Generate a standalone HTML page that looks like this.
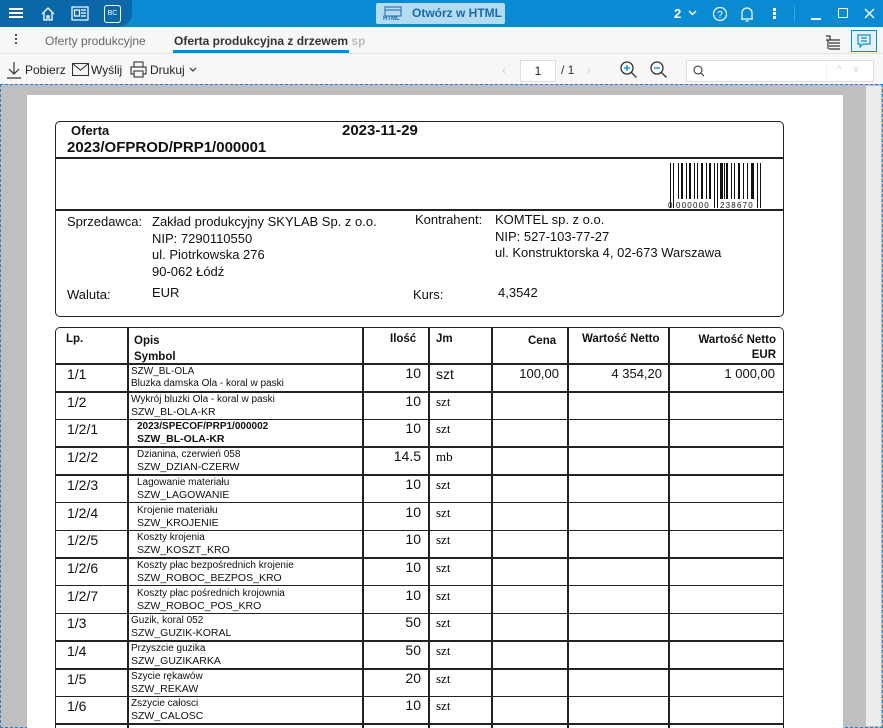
<!DOCTYPE html>
<html style="overflow:hidden"><head><meta charset="utf-8"><style>
*{margin:0;padding:0;box-sizing:border-box}
html,body{width:883px;height:728px;overflow:hidden}
body{font-family:"Liberation Sans",Arial,sans-serif;background:#fff;position:relative}
.a{position:absolute;white-space:nowrap}
.top{left:0;top:0;width:883px;height:27px;background:#0a8ad2}
.dark{left:0;top:0;width:132px;height:27px;background:#0b68a8;border-radius:0 0 14px 0}
.tabs{left:0;top:27px;width:883px;height:27px;background:#f8f7f6;border-bottom:1px solid #e4e4e4}
.tb{left:0;top:54px;width:883px;height:30px;background:#f8f7f6}
.viewer{left:0;top:84px;width:883px;height:644px;background:#bfbfbf;border:1px dashed #2a7fd0}
.page{left:27px;top:95px;width:816px;height:633px;background:#fff}
.bx{border:1.5px solid #222;border-radius:5px}
.t13{font-size:13px;color:#111}
.b{font-weight:bold}
.hl{position:absolute;height:1.5px;background:#222}
.vl{position:absolute;width:1.5px;background:#222}
.s{font-size:10px;font-family:"Liberation Sans",Arial Narrow,sans-serif;color:#111;line-height:12px}
.ser{font-family:"Liberation Serif",serif;font-size:13px}
</style></head><body>
<div class="a top"></div><div class="a dark"></div>
<div class="a" style="left:9px;top:8px;width:14px;height:1.5px;background:#fff;box-shadow:0 4px #fff,0 8px #fff"></div>
<svg class="a" style="left:40px;top:6px" width="16" height="16" viewBox="0 0 16 16" fill="none" stroke="#fff" stroke-width="1.3"><path d="M2 8L8 2l6 6M4 6.5V14h3v-4h2v4h3V6.5"/></svg>
<svg class="a" style="left:71px;top:6px" width="18" height="15" viewBox="0 0 18 15" fill="none" stroke="#fff" stroke-width="1.2"><rect x="1" y="1" width="16" height="13"/><rect x="3.5" y="4" width="5" height="6"/><path d="M10 4h5M10 7h5M10 10h5"/></svg>
<div class="a" style="left:104px;top:5px;width:17px;height:18px;border:1.2px solid #fff;border-radius:3px;color:#fff;font-size:7px;text-align:center;line-height:16px">BC</div>
<div class="a" style="left:376px;top:3px;width:129px;height:21px;background:#b3dcf3;border-radius:2px"></div>
<svg class="a" style="left:383px;top:6px" width="20" height="17" viewBox="0 0 20 17" fill="none" stroke="#1a6aa5" stroke-width="1"><rect x="2" y="1" width="16" height="9"/><path d="M2 4h16"/></svg>
<div class="a" style="left:383px;top:16px;font-size:6px;color:#1a6aa5;font-weight:bold">HTML</div>
<div class="a b" style="left:412px;top:6px;font-size:12px;color:#1a6aa5">Otwórz w HTML</div>
<div class="a b" style="left:674px;top:6px;font-size:13px;color:#fff">2</div>
<svg class="a" style="left:688px;top:10px" width="9" height="6"><path d="M1 1l3.5 3.5L8 1" stroke="#fff" stroke-width="1.5" fill="none"/></svg>
<svg class="a" style="left:712px;top:6px" width="16" height="16"><circle cx="8" cy="8" r="6.5" stroke="#fff" fill="none" stroke-width="1.2"/><text x="8" y="12" fill="#fff" font-size="10" text-anchor="middle" font-family="Liberation Sans">?</text></svg>
<svg class="a" style="left:740px;top:5px" width="14" height="18" fill="none" stroke="#fff" stroke-width="1.2"><path d="M2 14V8a5 5 0 0110 0v6zM1 14h12M5.5 16h3"/></svg>
<div class="a" style="left:773px;top:8px;width:3px;height:3px;background:#fff;box-shadow:0 4px #fff,0 8px #fff"></div>
<div class="a" style="left:794px;top:6px;width:1px;height:16px;background:#3fa3dd"></div>
<div class="a" style="left:811px;top:18px;width:10px;height:1.5px;background:#fff"></div>
<div class="a" style="left:838px;top:8px;width:10px;height:10px;border:1.3px solid #fff"></div>
<svg class="a" style="left:864px;top:8px" width="11" height="11"><path d="M1 1l9 9M10 1l-9 9" stroke="#fff" stroke-width="1.3"/></svg>
<div class="a tabs"></div>
<div class="a" style="left:15px;top:34px;width:2px;height:2px;background:#555;box-shadow:0 4px #555,0 8px #555"></div>
<div class="a" style="left:45px;top:34px;font-size:12px;color:#666">Oferty produkcyjne</div>
<div class="a b" style="left:174px;top:34px;font-size:12px;color:#333">Oferta produkcyjna z drzewem <span style="color:#bbb">sp</span></div>
<div class="a" style="left:173px;top:50px;width:176px;height:3px;background:#0a8ad2"></div>
<svg class="a" style="left:825px;top:34px" width="16" height="16" stroke="#333" stroke-width="1.2" fill="none"><path d="M1 2h4v4H1M4 6h11M4 9h11M4 12h11M4 15h11M3 6v9"/></svg>
<div class="a" style="left:851px;top:30px;width:26px;height:22px;border:1px solid #0a8ad2;background:#e6f3fb"></div>
<svg class="a" style="left:857px;top:34px" width="14" height="14" fill="none" stroke="#0a8ad2" stroke-width="1.2"><path d="M1 1h12v9H6l-3 3v-3H1zM4 4h6M4 7h6"/></svg>
<div class="a tb"></div>
<svg class="a" style="left:6px;top:61px" width="16" height="18" stroke="#333" stroke-width="1.2" fill="none"><path d="M8 1v12M3 8l5 5 5-5M1 17h14"/></svg>
<div class="a" style="left:25px;top:63px;font-size:12px;color:#222">Pobierz</div>
<svg class="a" style="left:72px;top:63px" width="17" height="13" stroke="#333" stroke-width="1.1" fill="none"><rect x="0.5" y="0.5" width="16" height="12"/><path d="M1 1l7.5 6L16 1"/></svg>
<div class="a" style="left:91px;top:63px;font-size:12px;color:#222">Wyślij</div>
<svg class="a" style="left:130px;top:61px" width="17" height="17" stroke="#333" stroke-width="1.1" fill="none"><rect x="4" y="1" width="9" height="5"/><rect x="1" y="6" width="15" height="7"/><rect x="4" y="10" width="9" height="6" fill="#f8f7f6"/></svg>
<div class="a" style="left:150px;top:63px;font-size:12px;color:#222">Drukuj</div>
<svg class="a" style="left:189px;top:67px" width="8" height="6"><path d="M1 1l3 3 3-3" stroke="#333" stroke-width="1.2" fill="none"/></svg>
<div class="a" style="left:502px;top:63px;font-size:12px;color:#ccc">‹</div>
<div class="a" style="left:520px;top:60px;width:36px;height:22px;background:#fff;border:1px solid #ddd;font-size:12px;text-align:center;line-height:20px;color:#222">1</div>
<div class="a" style="left:561px;top:63px;font-size:12px;color:#333">/ 1</div>
<div class="a" style="left:587px;top:63px;font-size:12px;color:#ccc">›</div>
<svg class="a" style="left:619px;top:60px" width="20" height="20" fill="none" stroke-width="1.3"><circle cx="8" cy="8" r="6" stroke="#333"/><path d="M12.5 12.5l5 5" stroke="#333"/><path d="M5 8h6M8 5v6" stroke="#0a8ad2"/></svg>
<svg class="a" style="left:649px;top:60px" width="20" height="20" fill="none" stroke-width="1.3"><circle cx="8" cy="8" r="6" stroke="#333"/><path d="M12.5 12.5l5 5" stroke="#333"/><path d="M5 8h6" stroke="#0a8ad2"/></svg>
<div class="a" style="left:686px;top:60px;width:188px;height:22px;background:#fff;border:1px solid #ddd"></div>
<svg class="a" style="left:693px;top:65px" width="12" height="12" fill="none" stroke="#333" stroke-width="1.1"><circle cx="5" cy="5" r="4"/><path d="M8 8l3 3"/></svg>
<div class="a" style="left:826px;top:63px;width:1px;height:16px;background:#eee"></div>
<div class="a" style="left:837px;top:64px;font-size:9px;color:#ccc">^&nbsp;&nbsp;&nbsp;&nbsp;&nbsp;v</div>
<div class="a viewer"></div>
<div class="a" style="left:866px;top:86px;width:15px;height:640px;background:#ececec"></div>
<div class="a page"></div>
<div class="a bx" style="left:55px;top:121px;width:729px;height:196px"></div>
<div class="hl" style="left:55px;top:157px;width:729px"></div>
<div class="hl" style="left:55px;top:209px;width:729px"></div>
<div class="a b" style="left:71px;top:123px;font-size:13px;color:#111">Oferta</div>
<div class="a b" style="left:67px;top:139px;font-size:15px;color:#111">2023/OFPROD/PRP1/000001</div>
<div class="a b" style="left:342px;top:122px;font-size:15px;color:#111">2023-11-29</div>
<svg class="a" style="left:668px;top:163px" width="98" height="46">
<g fill="#111">
<rect x="2" y="0" width="1" height="45"/><rect x="5" y="0" width="1" height="45"/>
<rect x="10" y="0" width="1" height="36"/><rect x="13" y="0" width="2" height="36"/><rect x="18" y="0" width="1" height="36"/><rect x="21" y="0" width="2" height="36"/><rect x="26" y="0" width="1" height="36"/><rect x="29" y="0" width="1" height="36"/><rect x="33" y="0" width="2" height="36"/><rect x="38" y="0" width="1" height="36"/><rect x="41" y="0" width="2" height="36"/>
<rect x="46" y="0" width="1" height="45"/><rect x="49" y="0" width="1" height="45"/>
<rect x="52" y="0" width="3" height="36"/><rect x="56" y="0" width="1" height="36"/><rect x="58" y="0" width="2" height="36"/><rect x="63" y="0" width="1" height="36"/><rect x="66" y="0" width="1" height="36"/><rect x="70" y="0" width="2" height="36"/><rect x="75" y="0" width="1" height="36"/><rect x="79" y="0" width="1" height="36"/><rect x="83" y="0" width="3" height="36"/>
<rect x="89" y="0" width="1" height="45"/><rect x="92" y="0" width="1" height="45"/>
</g>
<text x="0" y="45" font-size="8" font-family="Liberation Sans" fill="#111">0</text>
<text x="8" y="45" font-size="8" font-family="Liberation Sans" fill="#111" letter-spacing="1.2">000000</text>
<text x="52" y="45" font-size="8" font-family="Liberation Sans" fill="#111" letter-spacing="1.2">238670</text>
</svg>
<div class="a t13" style="left:67px;top:214px">Sprzedawca:</div>
<div class="a t13" style="left:152px;top:214px;line-height:16.5px">Zakład produkcyjny SKYLAB Sp. z o.o.<br>NIP: 7290110550<br>ul. Piotrkowska 276<br>90-062 Łódź</div>
<div class="a t13" style="left:415px;top:212px">Kontrahent:</div>
<div class="a t13" style="left:495px;top:212px;line-height:16.5px">KOMTEL sp. z o.o.<br>NIP: 527-103-77-27<br>ul. Konstruktorska 4, 02-673 Warszawa</div>
<div class="a t13" style="left:67px;top:287px">Waluta:</div>
<div class="a t13" style="left:152px;top:285px">EUR</div>
<div class="a t13" style="left:413px;top:287px">Kurs:</div>
<div class="a t13" style="left:498px;top:285px">4,3542</div>
<div class="a bx" style="left:55px;top:327px;width:729px;height:401px;border-bottom:none;border-radius:5px 5px 0 0"></div>
<div class="vl" style="left:127px;top:327px;height:401px"></div>
<div class="vl" style="left:362px;top:327px;height:401px"></div>
<div class="vl" style="left:428px;top:327px;height:401px"></div>
<div class="vl" style="left:491px;top:327px;height:401px"></div>
<div class="vl" style="left:567px;top:327px;height:401px"></div>
<div class="vl" style="left:668px;top:327px;height:401px"></div>
<div class="hl" style="left:55px;top:363px;width:729px;height:2px"></div>
<div class="a b" style="left:66px;top:333px;font-size:11.5px;color:#111">Lp.</div>
<div class="a b" style="left:134px;top:333px;font-size:11.5px;color:#111;line-height:16px">Opis<br>Symbol</div>
<div class="a b" style="left:390px;top:333px;font-size:11.5px;color:#111">Ilość</div>
<div class="a b" style="left:436px;top:333px;font-size:11.5px;color:#111">Jm</div>
<div class="a b" style="left:528px;top:335px;font-size:11.5px;color:#111">Cena</div>
<div class="a b" style="left:582px;top:333px;font-size:11.5px;color:#111">Wartość Netto</div>
<div class="a b" style="left:668px;top:333px;width:108px;text-align:right;font-size:11.5px;color:#111;line-height:15px">Wartość Netto<br>EUR</div>
<div id="rows"></div>
<script>
var R=[["1/1","SZW_BL-OLA","Bluzka damska Ola - koral w paski","10","szt",0,0],
["1/2","Wykrój bluzki Ola - koral w paski","SZW_BL-OLA-KR","10","szt",0,1],
["1/2/1","2023/SPECOF/PRP1/000002","SZW_BL-OLA-KR","10","szt",2,1],
["1/2/2","Dzianina, czerwień 058","SZW_DZIAN-CZERW","14.5","mb",1,1],
["1/2/3","Lagowanie materiału","SZW_LAGOWANIE","10","szt",1,1],
["1/2/4","Krojenie materiału","SZW_KROJENIE","10","szt",1,1],
["1/2/5","Koszty krojenia","SZW_KOSZT_KRO","10","szt",1,1],
["1/2/6","Koszty płac bezpośrednich krojenie","SZW_ROBOC_BEZPOS_KRO","10","szt",1,1],
["1/2/7","Koszty płac pośrednich krojownia","SZW_ROBOC_POS_KRO","10","szt",1,1],
["1/3","Guzik, koral 052","SZW_GUZIK-KORAL","50","szt",0,1],
["1/4","Przyszcie guzika","SZW_GUZIKARKA","50","szt",0,1],
["1/5","Szycie rękawów","SZW_REKAW","20","szt",0,1],
["1/6","Zszycie całosci","SZW_CALOSC","10","szt",0,1]];
var h="";
for(var i=0;i<R.length;i++){var r=R[i];var y=364+i*27.7;
var ind=r[5]?137:131;var bold=r[5]==2?"font-weight:bold;":"";
h+='<div class="a t13" style="left:67px;top:'+(y+2)+'px;font-size:14px">'+r[0]+'</div>';
h+='<div class="a s" style="left:'+ind+'px;top:'+(y+2)+'px;'+bold+'">'+r[1]+'<br><span style="'+(r[6]?'font-size:10.5px':'')+'">'+r[2]+'</span></div>';
h+='<div class="a t13" style="left:362px;width:59px;text-align:right;top:'+(y+1)+'px;font-size:14px">'+r[3]+'</div>';
h+='<div class="a '+(i==0?'t13':'ser')+'" style="left:436px;top:'+(y+2)+'px;font-size:'+(i==0?14:13)+'px">'+r[4]+'</div>';
if(i==0){h+='<div class="a t13" style="left:491px;width:68px;text-align:right;top:'+(y+2)+'px;font-size:13px">100,00</div><div class="a t13" style="left:567px;width:95px;text-align:right;top:'+(y+2)+'px">4 354,20</div><div class="a t13" style="left:668px;width:107px;text-align:right;top:'+(y+2)+'px">1 000,00</div>';}
h+='<div class="hl" style="left:55px;top:'+(y+27)+'px;width:729px"></div>';}
document.getElementById("rows").innerHTML=h;
</script>
</body></html>
